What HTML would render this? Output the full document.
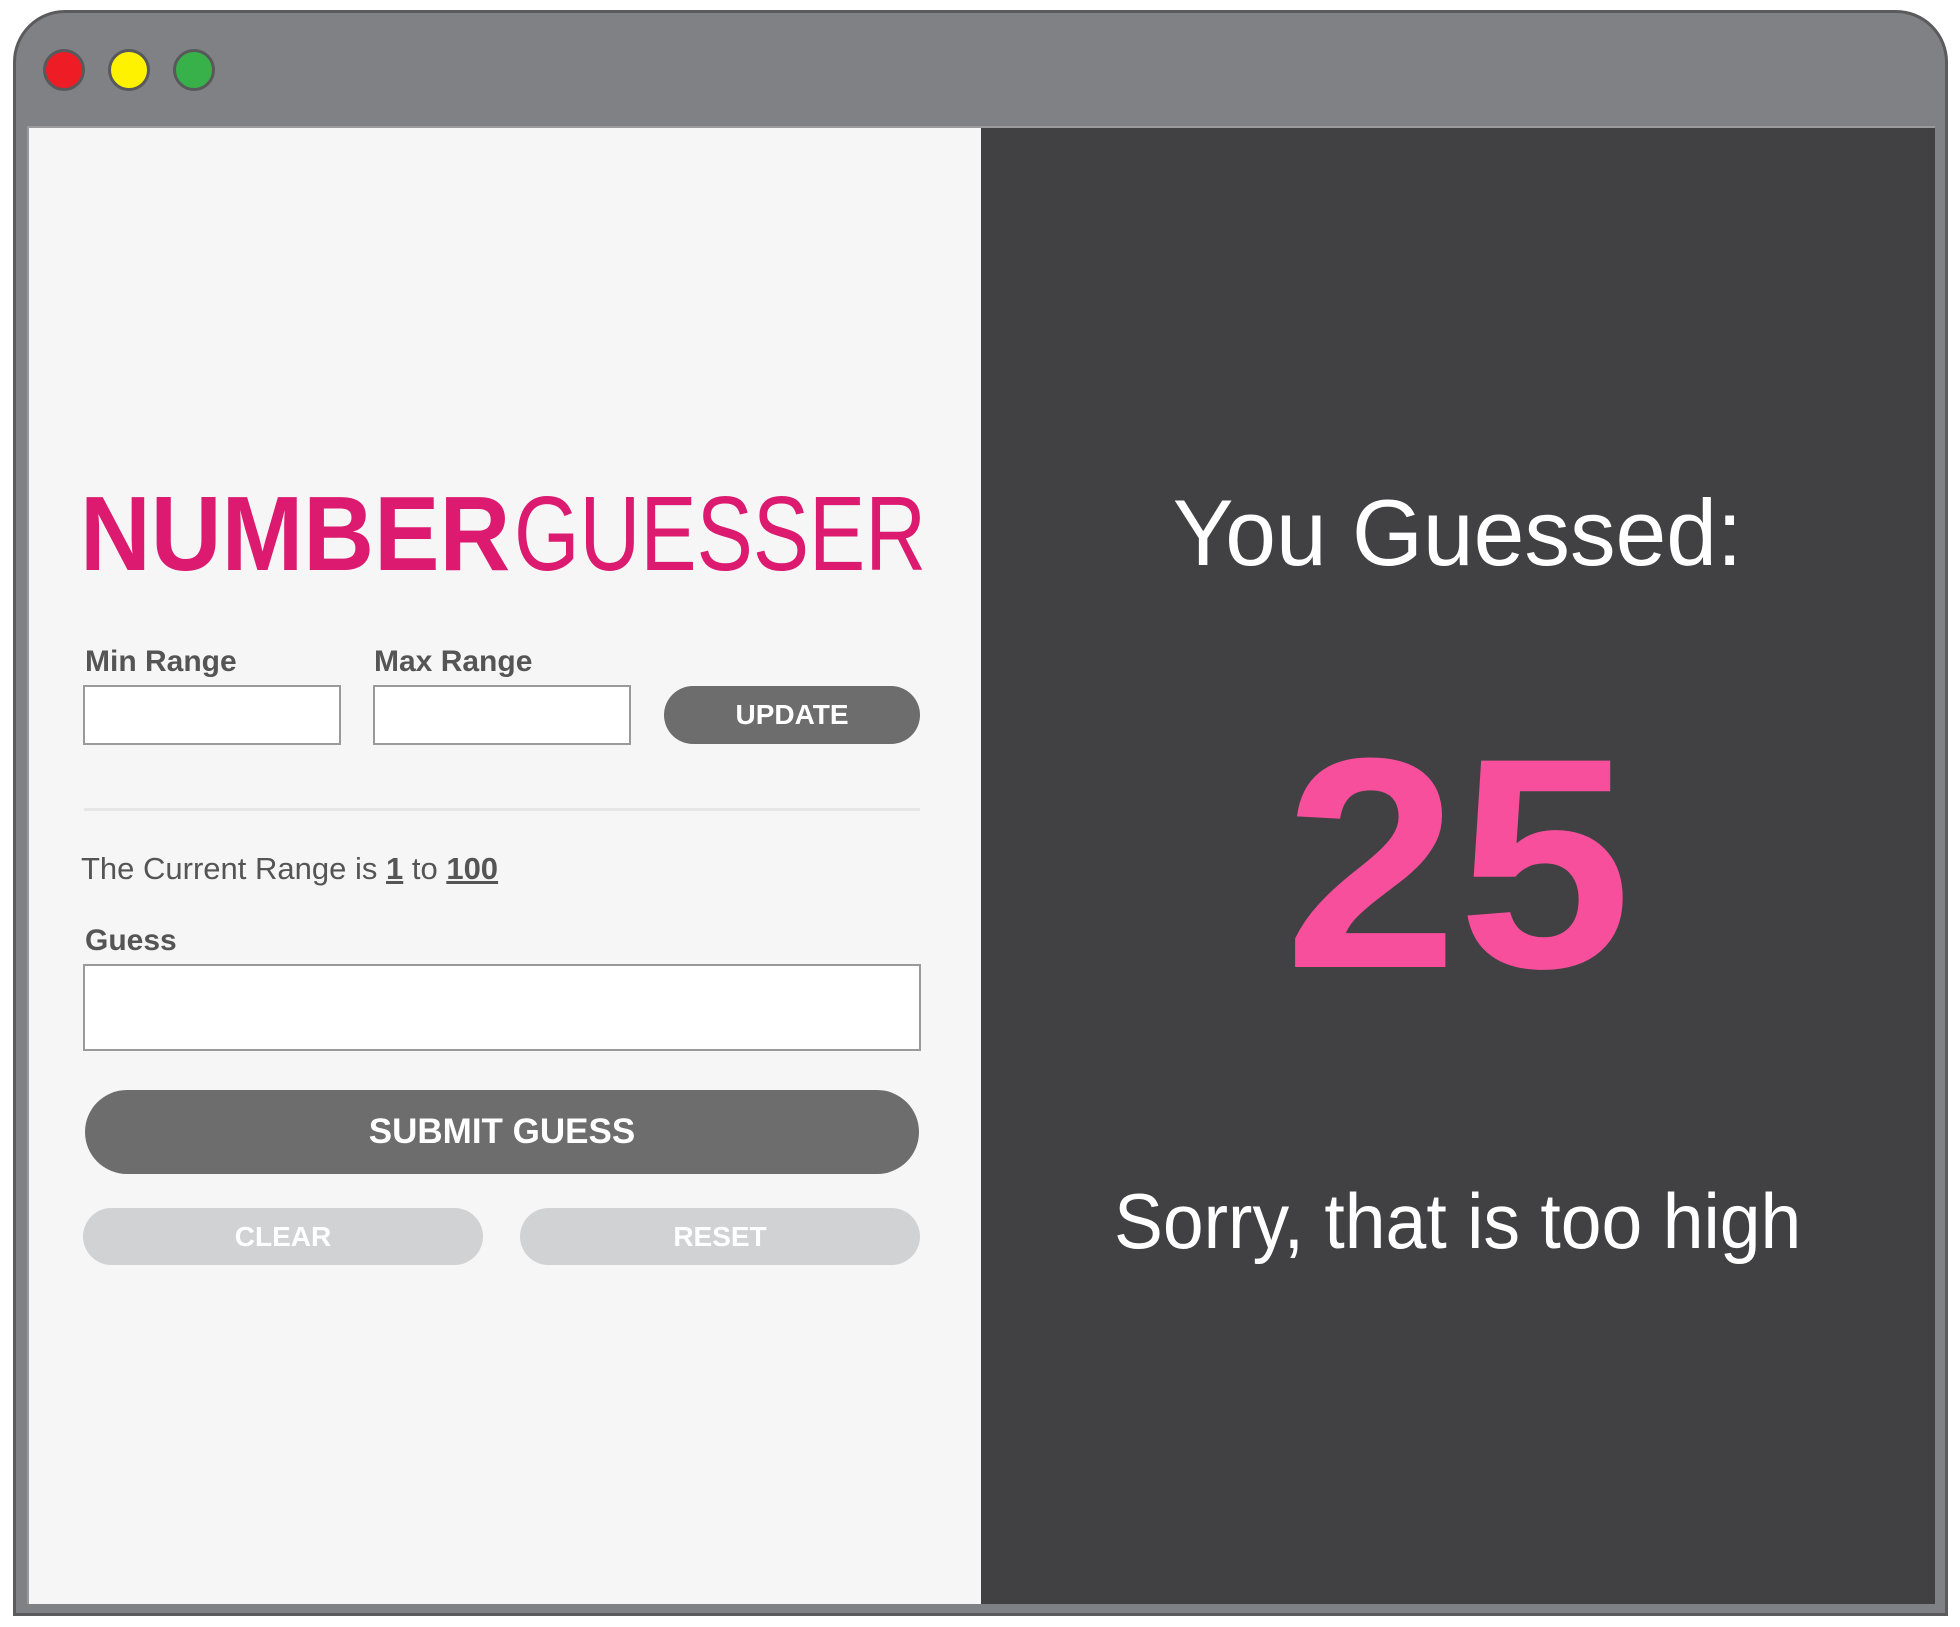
<!DOCTYPE html>
<html><head><meta charset="utf-8"><style>
*{margin:0;padding:0;box-sizing:border-box}
body{width:1960px;height:1627px;background:#fff;position:relative;overflow:hidden;font-family:"Liberation Sans",sans-serif}
.win{position:absolute;left:13px;top:10px;width:1935px;height:1606px;background:#808184;border:3px solid #5b5b5d;border-radius:52px 52px 0 0}
.dot{position:absolute;top:49px;width:42px;height:42px;border-radius:50%;border:3px solid #58595b}
.left{position:absolute;left:27px;top:126px;width:954px;height:1478px;background:#f6f6f6;border-top:2px solid #9a9a9c;border-left:2px solid #9a9a9c}
.right{position:absolute;left:981px;top:126px;width:954px;height:1478px;background:#414143;border-top:2px solid #9a9a9c}
.t{position:absolute;white-space:nowrap;line-height:1}
.lbl{font-size:30px;font-weight:bold;color:#555}
.inp{position:absolute;background:#fff;border:2px solid #9a9a9a}
.btn{position:absolute;border-radius:40px;display:flex;align-items:center;justify-content:center;color:#fff;font-weight:bold}
</style></head><body>
<div class="win"></div>
<div class="dot" style="left:43px;background:#ee1c25"></div>
<div class="dot" style="left:108px;background:#fff200"></div>
<div class="dot" style="left:173px;background:#39b14a"></div>
<div class="left"></div>
<div class="right"></div>

<div class="t" style="left:80px;top:481px;font-size:106px;color:#dc1a6f">
<span style="display:inline-block;font-weight:bold;transform:scaleX(0.925);transform-origin:left">NUMBER</span></div>
<div class="t" style="left:514px;top:481px;font-size:106px;color:#dc1a6f">
<span style="display:inline-block;transform:scaleX(0.795);transform-origin:left">GUESSER</span></div>

<div class="t lbl" style="left:85px;top:647px">Min Range</div>
<div class="t lbl" style="left:374px;top:647px">Max Range</div>
<div class="inp" style="left:83px;top:685px;width:258px;height:60px"></div>
<div class="inp" style="left:373px;top:685px;width:258px;height:60px"></div>
<div class="btn" style="left:664px;top:686px;width:256px;height:58px;background:#6d6d6d;font-size:28px">UPDATE</div>

<div style="position:absolute;left:84px;top:808px;width:836px;height:3px;background:#e6e6e6"></div>

<div class="t" style="left:81px;top:853px;font-size:31px;color:#555">The Current Range is <b style="text-decoration:underline">1</b> to <b style="text-decoration:underline">100</b></div>

<div class="t lbl" style="left:85px;top:926px">Guess</div>
<div class="inp" style="left:83px;top:964px;width:838px;height:87px"></div>
<div class="btn" style="left:85px;top:1090px;width:834px;height:84px;background:#6d6d6d;font-size:35px;border-radius:44px">SUBMIT GUESS</div>
<div class="btn" style="left:83px;top:1208px;width:400px;height:57px;background:#d1d2d4;font-size:28px">CLEAR</div>
<div class="btn" style="left:520px;top:1208px;width:400px;height:57px;background:#d1d2d4;font-size:28px">RESET</div>

<div class="t" style="left:981px;width:954px;text-align:center;top:486px;font-size:94px;color:#fff"><span style="display:inline-block;transform:scaleX(0.97)">You Guessed:</span></div>
<div class="t" style="left:981px;width:954px;text-align:center;top:713px;font-size:300px;font-weight:bold;color:#f74f9c"><span style="display:inline-block;transform:scaleX(1.04)">25</span></div>
<div class="t" style="left:981px;width:954px;text-align:center;top:1182px;font-size:78px;color:#fff"><span style="display:inline-block;transform:scaleX(0.94)">Sorry, that is too high</span></div>
</body></html>
